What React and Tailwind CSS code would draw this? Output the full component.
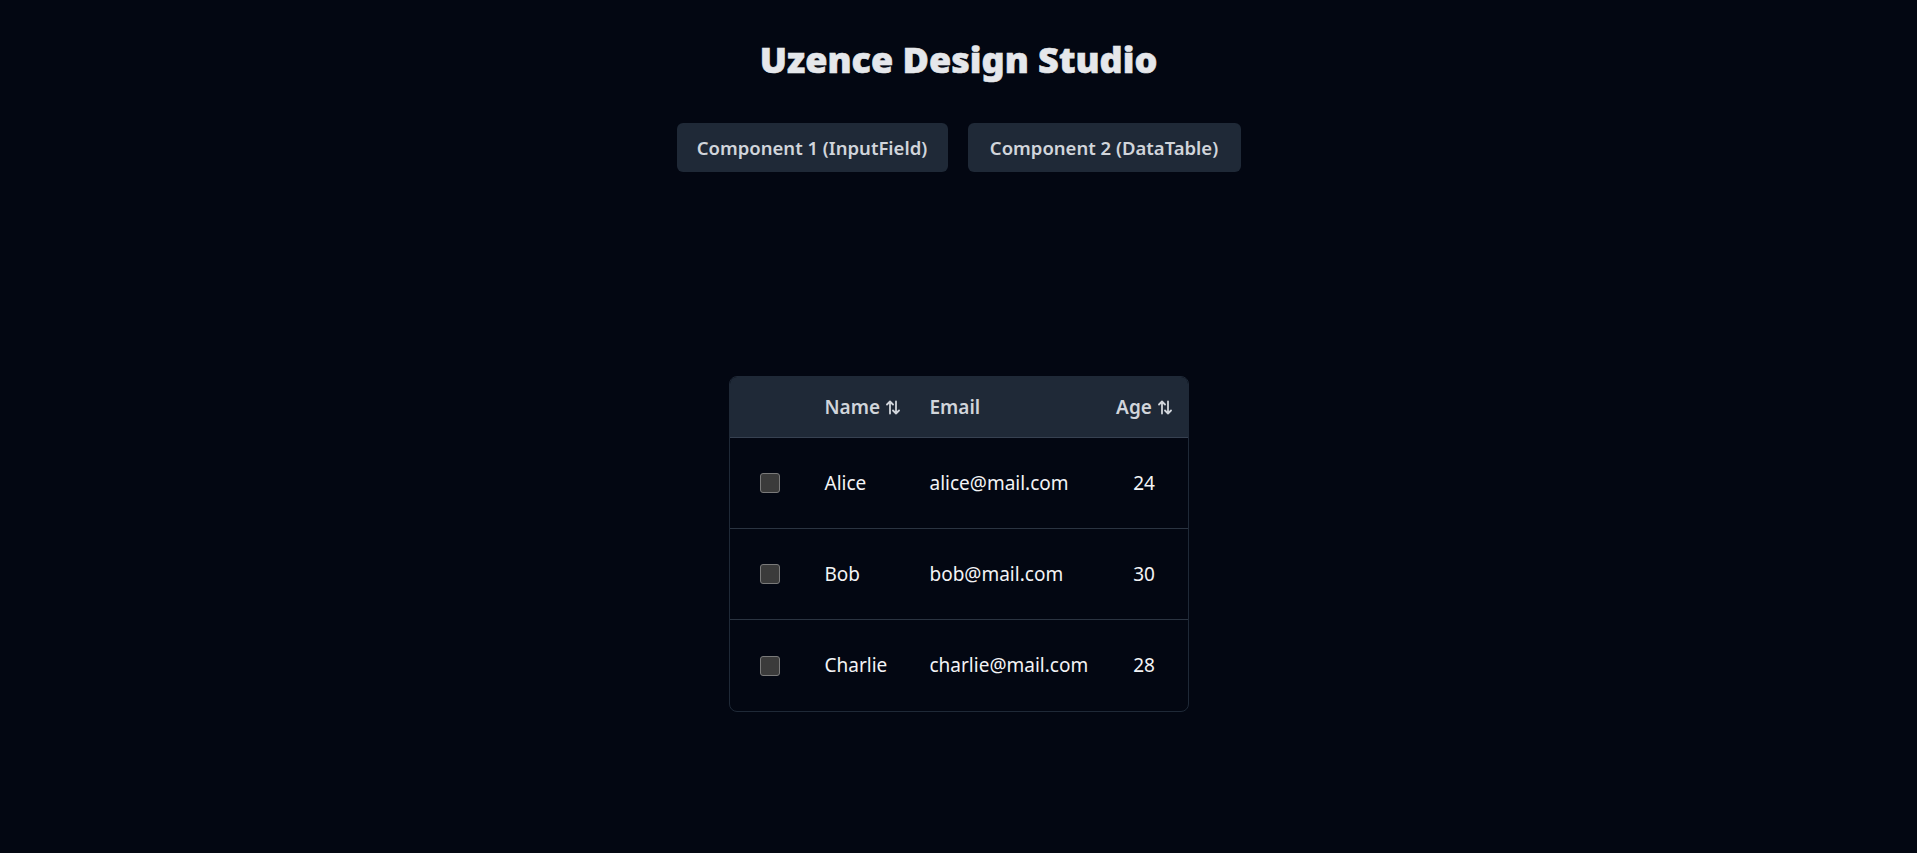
import { useState } from 'react';

const rows = [
  { name: 'Alice', email: 'alice@mail.com', age: 24 },
  { name: 'Bob', email: 'bob@mail.com', age: 30 },
  { name: 'Charlie', email: 'charlie@mail.com', age: 28 },
];

// small up/down sort glyph used in the header
function SortIcon() {
  return (
    <svg width="14" height="15" viewBox="0 0 14 15" fill="none" stroke="currentColor" strokeWidth="1.8" strokeLinecap="round" strokeLinejoin="round" className="inline-block ml-[6px] mt-[1px]">
      <path d="M4 13.5V1.5M1 4.5l3-3 3 3" />
      <path d="M10 1.5v12M7 10.5l3 3 3-3" />
    </svg>
  );
}

function Checkbox() {
  return <div className="w-[20px] h-[20px] rounded-[3px] bg-[#3b3b3b] border border-[#7a7a7a]"></div>;
}

export default function App() {
  const [tab, setTab] = useState(2);

  return (
    <div className="min-h-screen bg-[#030712] flex flex-col items-center pt-[37px] font-['Noto_Sans',sans-serif]">
      <h1 className="text-[36px] leading-[45px] font-black text-[#e5e7eb] mb-[41px] [-webkit-text-stroke:0.6px_#e5e7eb]">
        Uzence Design Studio
      </h1>

      <div className="flex gap-[20px]">
        <button onClick={() => setTab(1)} className="h-[49px] w-[271px] rounded-md bg-[#1f2937] text-[#d1d5db] text-[18.5px] font-semibold">
          Component 1 (InputField)
        </button>
        <button onClick={() => setTab(2)} className="h-[49px] w-[273px] rounded-md bg-[#1f2937] text-[#d1d5db] text-[18.5px] font-semibold">
          Component 2 (DataTable)
        </button>
      </div>

      {tab === 2 && (
        <div className="mt-[204px] w-[460px] rounded-[8px] border border-[#1f2937] overflow-hidden">
          <div className="grid grid-cols-[95px_105px_1fr_72px] h-[61px] items-center bg-[#1f2937] border-b border-[#374151] text-[19px] font-semibold text-[#d1d5db]">
            <div></div>
            <div className="flex items-center">Name<SortIcon /></div>
            <div>Email</div>
            <div className="pr-[15px] flex items-center justify-center">Age<SortIcon /></div>
          </div>
          {rows.map((r, i) => (
            <div
              key={r.name}
              className={
                'grid grid-cols-[95px_105px_1fr_72px] h-[91px] items-center text-[19px] text-[#f3f4f6] ' +
                (i < rows.length - 1 ? 'border-b border-[#2b3441]' : '')
              }
            >
              <div className="pl-[30px]">
                <Checkbox />
              </div>
              <div>{r.name}</div>
              <div>{r.email}</div>
              <div className="pr-[15px] text-center">{r.age}</div>
            </div>
          ))}
        </div>
      )}
    </div>
  );
}
